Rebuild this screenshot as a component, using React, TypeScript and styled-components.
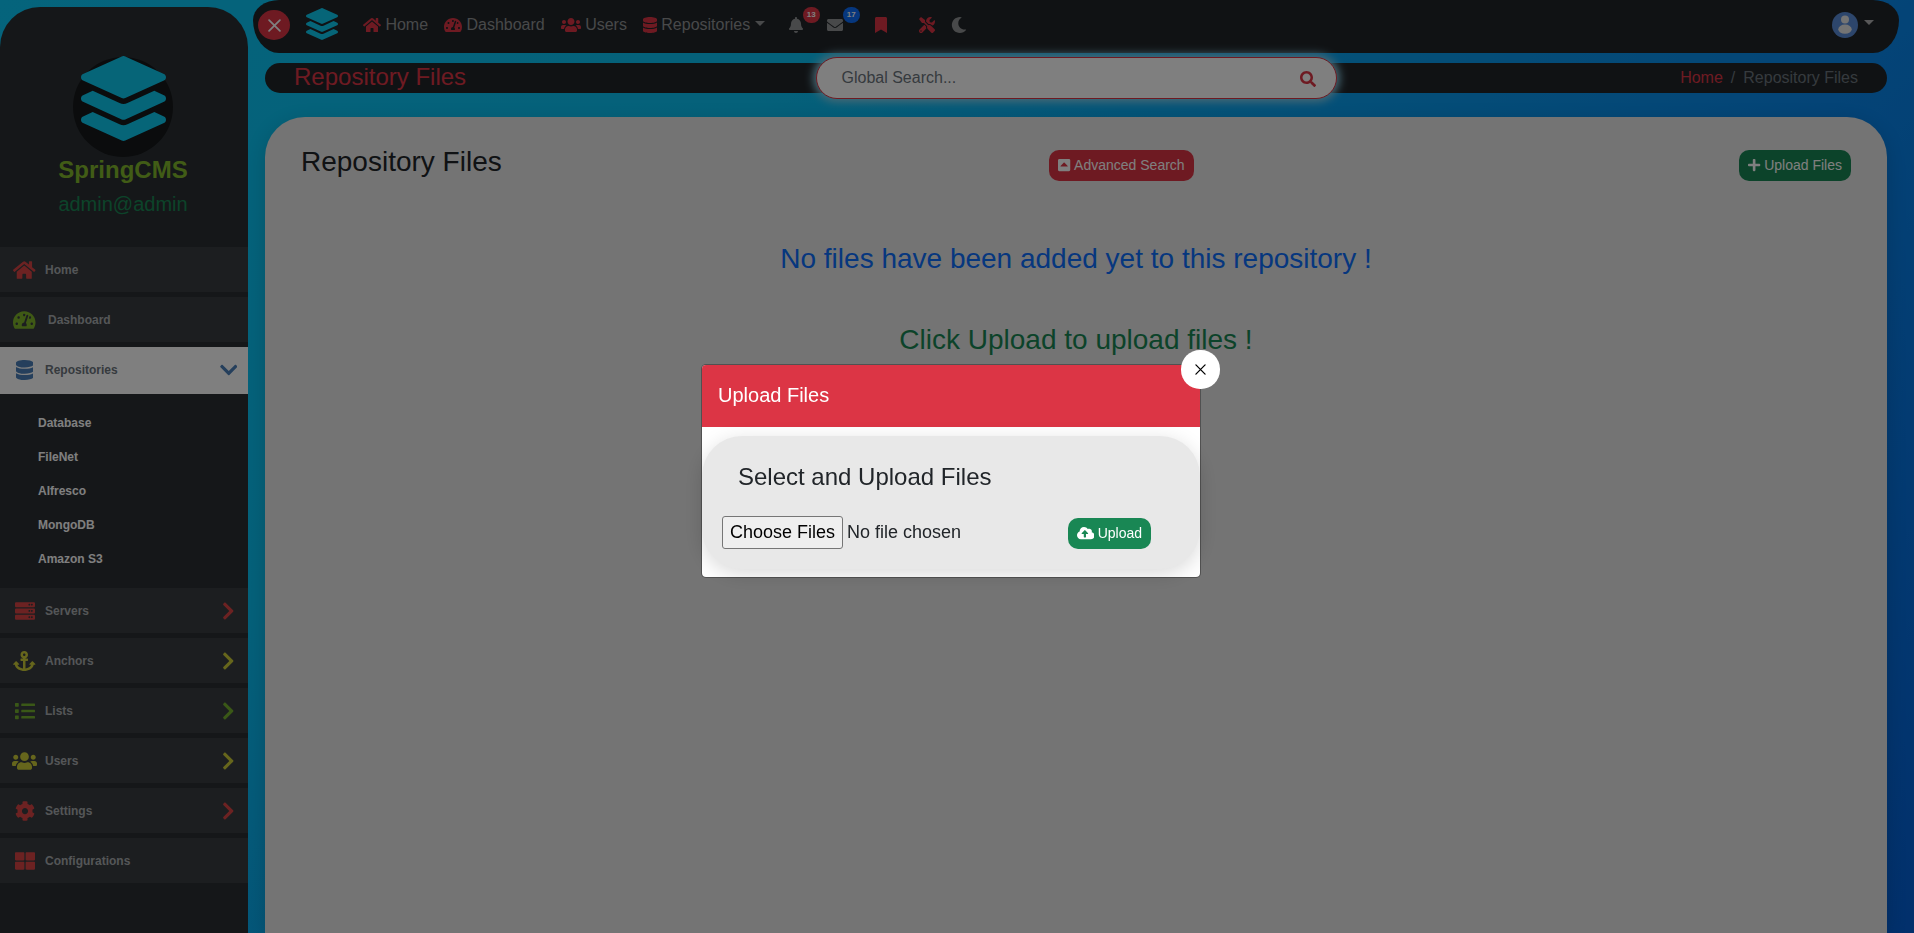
import React from "react";
import styled, { createGlobalStyle, css } from "styled-components";
import type { IconType } from "react-icons";
import {
  FaHome, FaTachometerAlt, FaDatabase, FaServer, FaAnchor, FaList, FaUsers, FaCog, FaThLarge,
  FaChevronRight, FaChevronDown, FaLayerGroup, FaBell, FaEnvelope, FaBookmark, FaTools, FaMoon,
  FaSearch, FaCaretSquareUp, FaPlus, FaCloudUploadAlt,
} from "react-icons/fa";

const Global = createGlobalStyle`
  *, *::before, *::after { box-sizing: border-box; }
  html, body { margin: 0; height: 100%; overflow: hidden; }
  body {
    font-family: "Liberation Sans", Arial, sans-serif;
    font-size: 16px;
    line-height: 1.5;
    color: #212529;
  }
  svg { display: block; flex: none; }
`;

const Page = styled.div`
  display: flex;
  height: 933px;
  background: linear-gradient(135deg, #0ac8f8 0%, #0ac2f4 30%, #08a8f2 45%, #0899f0 55%, #0888ee 68%, #0460d8 100%);
`;

const GlyphBox = styled.span<{ $w: number; $h: number }>`
  display: block;
  flex: none;
  width: ${(p) => p.$w}px;
  height: ${(p) => p.$h}px;
  svg { width: 100%; height: 100%; }
`;

const Glyph = ({ icon: Icon, size, ratio = 1 }: { icon: IconType; size: number; ratio?: number }) => (
  <GlyphBox $w={size * ratio} $h={size}><Icon /></GlyphBox>
);

const Sidebar = styled.aside`
  width: 248px;
  margin-top: 7px;
  flex: none;
  background: #2b2f33;
  border-radius: 40px 40px 0 0;
  overflow: hidden;
`;

const Profile = styled.div`
  height: 240px;
  padding: 50px 2px 0 0;
  display: flex;
  flex-direction: column;
  align-items: center;
`;

const LogoDisc = styled.div`
  width: 100px;
  height: 100px;
  border-radius: 50%;
  background: #16191b;
  display: flex;
  justify-content: center;
  svg { margin-top: -1px; color: #0dcaf0; }
`;

const Brand = styled.div`
  font-size: 24px;
  font-weight: 700;
  line-height: 29px;
  margin-top: -2px;
  color: #82b92c;
`;

const Account = styled.div`
  font-size: 20px;
  line-height: 24px;
  margin-top: 8px;
  color: #198754;
`;

const MenuItem = styled.div<{ $active?: boolean; $wide?: boolean }>`
  display: flex;
  align-items: center;
  height: ${(p) => (p.$active ? 47 : 45)}px;
  margin-bottom: ${(p) => (p.$active ? 0 : 5)}px;
  padding: 0 12px ${(p) => (p.$active ? 2 : 0)}px;
  background: ${(p) => (p.$active ? "#fff" : "#393d40")};
  color: ${(p) => (p.$active ? "#6c757d" : "#a9adb0")};
  font-size: 12px;
  font-weight: 700;
`;

const MenuLabel = styled.span<{ $wide?: boolean }>`
  flex: 1;
  margin-left: ${(p) => (p.$wide ? 11 : 8)}px;
`;

const MenuIcon = styled.div<{ $color: string }>`
  width: 25px;
  display: flex;
  justify-content: center;
  color: ${(p) => p.$color};
`;

const Arrow = styled.div<{ $color: string }>`
  width: 17px;
  display: flex;
  justify-content: center;
  margin-right: -1px;
  color: ${(p) => p.$color};
`;

const SubMenu = styled.div`
  height: 194px;
  padding: 12px 38px;
  color: #fff;
  font-size: 12px;
  font-weight: 700;
  div { height: 34px; line-height: 34px; }
`;

const Main = styled.main`
  flex: 1;
  display: flex;
  flex-direction: column;
  min-width: 0;
`;

const NavBar = styled.nav`
  height: 53px;
  margin: 0 15px 0 5px;
  border-radius: 26px 26px 26px 26px / 20px 20px 33px 33px;
  background: #212529;
  display: flex;
  align-items: center;
  padding: 0 25px 3px 5px;
`;

const CloseMenu = styled.div`
  width: 32px;
  height: 30px;
  border-radius: 50%;
  background: #dc3545;
  display: flex;
  align-items: center;
  justify-content: center;
  color: #fff;
`;

const NavLogo = styled.div`
  margin: -2px 25px 0 16px;
  color: #0dcaf0;
`;

const NavLink = styled.div`
  display: flex;
  align-items: center;
  gap: 4.4px;
  margin-right: 16px;
  line-height: 24px;
  color: #909294;
  svg { color: #dc3545; }
`;

const Caret = styled.i<{ $lift?: number }>`
  border-top: 5px solid currentColor;
  border-left: 5px solid transparent;
  border-right: 5px solid transparent;
  margin-bottom: ${(p) => p.$lift ?? 3}px;
`;

const NavIcon = styled.div<{ $color: string; $gap: number }>`
  position: relative;
  margin-left: ${(p) => p.$gap}px;
  margin-top: -1px;
  color: ${(p) => p.$color};
`;

const Badge = styled.span<{ $color: string }>`
  position: absolute;
  left: 100%;
  top: -10px;
  width: 17px;
  height: 16px;
  border-radius: 8px;
  background: ${(p) => p.$color};
  color: #fff;
  font-size: 8px;
  font-weight: 700;
  line-height: 15px;
  text-align: center;
`;

const UserMenu = styled.div`
  display: flex;
  align-items: center;
  gap: 6px;
  margin-left: auto;
  color: #b0b1b2;
`;

const TitleBar = styled.div`
  height: 30px;
  margin: 10px 27px 0 17px;
  padding: 0 29px;
  border-radius: 15px;
  background: #212529;
  display: grid;
  grid-template-columns: 1fr 521px 1fr;
  grid-template-rows: 30px;
  align-items: center;
`;

const BarTitle = styled.div`
  font-size: 24px;
  line-height: 28px;
  margin-top: -2px;
  color: #dc3545;
`;

const SearchBox = styled.div`
  height: 42px;
  border: 1px solid #dc3545;
  border-radius: 21px;
  background: #fff;
  box-shadow: 0 0 9px 3px #8fd0e8;
  display: flex;
  align-items: center;
  justify-content: space-between;
  padding: 0 20px 0 25px;
  color: #6c757d;
  svg { color: #dc3545; margin-top: 1px; }
`;

const Crumbs = styled.div`
  display: flex;
  justify-content: flex-end;
  gap: 8px;
  color: #6c757d;
  b { font-weight: 400; color: #dc3545; }
`;

const Card = styled.section`
  flex: 1;
  margin: 24px 27px 0 17px;
  padding: 29px 36px 0;
  border-radius: 40px 40px 0 0;
  background: #e8e8e8;
  box-shadow: 0 5px 20px rgba(0, 0, 0, 0.15);
`;

const CardHead = styled.div`
  display: grid;
  grid-template-columns: 1fr auto 1fr;
  align-items: start;
  height: 52px;
`;

const Heading = styled.h3`
  margin: -1px 0 0;
  font-size: 28px;
  font-weight: 400;
  line-height: 33px;
`;

const Button = styled.button<{ $color: string; $push?: number; $drop?: number }>`
  height: 31px;
  padding: 0 9px 1px;
  border: 0;
  border-radius: 10px;
  background: ${(p) => p.$color};
  color: #fff;
  font: 14px "Liberation Sans", Arial, sans-serif;
  display: flex;
  align-items: center;
  gap: 3.5px;
  justify-self: end;
  ${(p) => p.$push && css`margin-left: ${p.$push}px;`}
  margin-top: ${(p) => p.$drop ?? 4}px;
`;

const Notice = styled.div<{ $color: string; $top: number }>`
  margin-top: ${(p) => p.$top}px;
  text-align: center;
  font-size: 28px;
  line-height: 34px;
  color: ${(p) => p.$color};
`;

const Backdrop = styled.div`
  position: fixed;
  inset: 0;
  background: rgba(0, 0, 0, 0.5);
`;

const Dialog = styled.div`
  position: fixed;
  left: 701px;
  top: 364px;
  width: 500px;
  height: 214px;
  border: 1px solid rgba(0, 0, 0, 0.3);
  border-radius: 5px;
  background: #fff;
  background-clip: padding-box;
`;

const DialogHead = styled.div`
  height: 62px;
  padding: 0 16px;
  line-height: 61px;
  font-size: 20px;
  color: #fff;
  background: #dc3545;
  border-radius: 4px 4px 0 0;
`;

const DialogClose = styled.div`
  position: absolute;
  right: -20px;
  top: -15px;
  width: 39px;
  height: 39px;
  border-radius: 19px;
  background: #fff;
  display: flex;
  align-items: center;
  justify-content: center;
  color: #000;
`;

const DialogCard = styled.div`
  height: 133px;
  margin: 9px 0 0;
  padding: 24px 49px 0 20px;
  border-radius: 40px;
  background: #e8e8e8;
  box-shadow: 0 5px 20px rgba(0, 0, 0, 0.15);
`;

const DialogTitle = styled.h4`
  margin: 0 0 0 16px;
  font-size: 24px;
  font-weight: 400;
  line-height: 34px;
`;

const FileRow = styled.div`
  display: flex;
  align-items: center;
  justify-content: space-between;
  margin-top: 22px;
`;

const FilePick = styled.div`
  display: flex;
  align-items: center;
  gap: 4px;
  font-size: 18px;
  button {
    height: 33px;
    padding: 0 7px;
    border: 1px solid #767676;
    border-radius: 3px;
    background: #efefef;
    color: #000;
    font: 18px "Liberation Sans", Arial, sans-serif;
  }
`;

const Cross = ({ size, width }: { size: number; width: number }) => (
  <svg width={size} height={size} viewBox="0 0 12 12" fill="none" stroke="currentColor" strokeWidth={width} strokeLinecap="round">
    <path d="M1 1 11 11M11 1 1 11" />
  </svg>
);

const red = "#d94545";
const yellow = "#cccc38";
const green = "#7fb52b";
const blue = "#4a7fb8";

const menu = [
  { label: "Servers", icon: FaServer, ratio: 1, color: red, arrow: true },
  { label: "Anchors", icon: FaAnchor, ratio: 1.125, color: yellow, arrow: true },
  { label: "Lists", icon: FaList, ratio: 1, color: "#74b02e", arrow: true },
  { label: "Users", icon: FaUsers, ratio: 1.25, color: yellow, arrow: true },
  { label: "Settings", icon: FaCog, ratio: 1, color: red, arrow: true },
  { label: "Configurations", icon: FaThLarge, ratio: 1, color: red, arrow: false },
];

export default function App() {
  return (
    <>
      <Global />
      <Page>
        <Sidebar>
          <Profile>
            <LogoDisc><FaLayerGroup size={85} /></LogoDisc>
            <Brand>SpringCMS</Brand>
            <Account>admin@admin</Account>
          </Profile>
          <MenuItem>
            <MenuIcon $color={red}><Glyph icon={FaHome} size={20} ratio={1.125} /></MenuIcon>
            <MenuLabel>Home</MenuLabel>
          </MenuItem>
          <MenuItem>
            <MenuIcon $color={green}><Glyph icon={FaTachometerAlt} size={20} ratio={1.125} /></MenuIcon>
            <MenuLabel $wide>Dashboard</MenuLabel>
          </MenuItem>
          <MenuItem $active>
            <MenuIcon $color={blue}><Glyph icon={FaDatabase} size={20} ratio={0.875} /></MenuIcon>
            <MenuLabel>Repositories</MenuLabel>
            <Arrow $color={blue}><Glyph icon={FaChevronDown} size={20} ratio={0.875} /></Arrow>
          </MenuItem>
          <SubMenu>
            {["Database", "FileNet", "Alfresco", "MongoDB", "Amazon S3"].map((s) => <div key={s}>{s}</div>)}
          </SubMenu>
          {menu.map(({ label, icon, ratio, color, arrow }) => (
            <MenuItem key={label}>
              <MenuIcon $color={color}><Glyph icon={icon} size={20} ratio={ratio} /></MenuIcon>
              <MenuLabel>{label}</MenuLabel>
              {arrow && <Arrow $color={color}><Glyph icon={FaChevronRight} size={20} ratio={0.625} /></Arrow>}
            </MenuItem>
          ))}
        </Sidebar>
        <Main>
          <NavBar>
            <CloseMenu><Cross size={13} width={1.6} /></CloseMenu>
            <NavLogo><FaLayerGroup size={32} /></NavLogo>
            <NavLink><Glyph icon={FaHome} size={16} ratio={1.125} />Home</NavLink>
            <NavLink><Glyph icon={FaTachometerAlt} size={16} ratio={1.125} />Dashboard</NavLink>
            <NavLink><Glyph icon={FaUsers} size={16} ratio={1.25} />Users</NavLink>
            <NavLink><Glyph icon={FaDatabase} size={16} ratio={0.875} />Repositories<Caret /></NavLink>
            <NavIcon $color="#909294" $gap={8}>
              <Glyph icon={FaBell} size={16} ratio={0.875} /><Badge $color="#dc3545">13</Badge>
            </NavIcon>
            <NavIcon $color="#909294" $gap={24}>
              <Glyph icon={FaEnvelope} size={16} /><Badge $color="#0d6efd">17</Badge>
            </NavIcon>
            <NavIcon $color="#dc3545" $gap={32}><Glyph icon={FaBookmark} size={16} ratio={0.75} /></NavIcon>
            <NavIcon $color="#dc3545" $gap={32}><Glyph icon={FaTools} size={16} /></NavIcon>
            <NavIcon $color="#909294" $gap={16}><Glyph icon={FaMoon} size={16} /></NavIcon>
            <UserMenu>
              <svg width="26" height="26" viewBox="0 0 26 26">
                <circle cx="13" cy="13" r="13" fill="#5b8dd9" />
                <circle cx="13" cy="7.5" r="4" fill="#e8e8e8" />
                <ellipse cx="13" cy="17.2" rx="6.7" ry="4.6" fill="#e8e8e8" />
              </svg>
              <Caret $lift={6} />
            </UserMenu>
          </NavBar>
          <TitleBar>
            <BarTitle>Repository Files</BarTitle>
            <SearchBox>Global Search...<Glyph icon={FaSearch} size={16} /></SearchBox>
            <Crumbs><b>Home</b><span>/</span><span>Repository Files</span></Crumbs>
          </TitleBar>
          <Card>
            <CardHead>
              <Heading>Repository Files</Heading>
              <Button $color="#dc3545" $push={91}>
                <Glyph icon={FaCaretSquareUp} size={14} ratio={0.875} />Advanced Search
              </Button>
              <Button $color="#198754"><Glyph icon={FaPlus} size={14} ratio={0.875} />Upload Files</Button>
            </CardHead>
            <Notice $color="#0d6efd" $top={44}>No files have been added yet to this repository !</Notice>
            <Notice $color="#198754" $top={47}>Click Upload to upload files !</Notice>
          </Card>
        </Main>
      </Page>
      <Backdrop />
      <Dialog>
        <DialogHead>Upload Files</DialogHead>
        <DialogClose><Cross size={11} width={1.4} /></DialogClose>
        <DialogCard>
          <DialogTitle>Select and Upload Files</DialogTitle>
          <FileRow>
            <FilePick><button>Choose Files</button>No file chosen</FilePick>
            <Button $color="#198754" $drop={2}>
              <Glyph icon={FaCloudUploadAlt} size={14} ratio={1.25} />Upload
            </Button>
          </FileRow>
        </DialogCard>
      </Dialog>
    </>
  );
}
